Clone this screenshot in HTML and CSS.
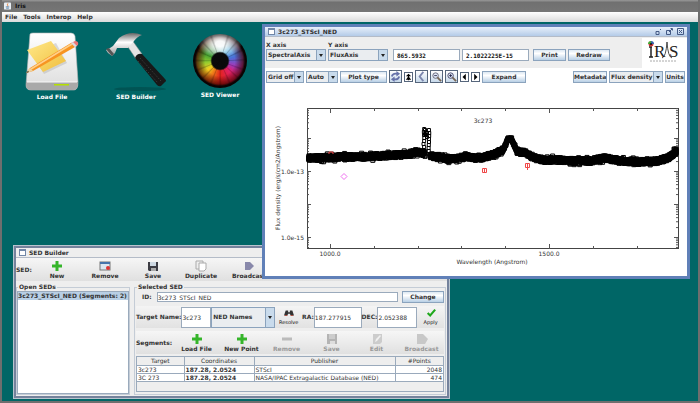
FILE: index.html
```
<!DOCTYPE html>
<html lang="en">
<head>
    <meta charset="UTF-8">
    <meta name="viewport" content="width=device-width, initial-scale=1.0">
    <title>Iris</title>
    <link rel="stylesheet" href="styles.css">
</head>
<body>

    <header class="app-title">
        <svg class="java-icon" viewBox="0 0 8 8"><rect width="8" height="8" rx="1" fill="#e8eef4"/><path d="M4.5 1C3 2.500 5 3 4 4.500" stroke="#e07020" fill="none"/><path d="M2 5h4M2.500 6.500h3" stroke="#5580a8"/></svg>
        <span>Iris</span>
    </header>

    <nav class="menu-bar">
        <button>File</button>
        <button>Tools</button>
        <button>Interop</button>
        <button>Help</button>
    </nav>

    <main class="desktop">

        <div class="launchers">
            <button class="launcher">
                <svg viewBox="0 0 60 60">
                    <defs>
                        <linearGradient id="disk" x1="0" y1="0" x2="0" y2="1"><stop offset="0" stop-color="#fff"/><stop offset="1" stop-color="#dcdcdc"/></linearGradient>
                        <linearGradient id="note" x1="0" y1="0" x2="1" y2="1"><stop offset="0" stop-color="#ffe98a"/><stop offset="1" stop-color="#f0bd3c"/></linearGradient>
                    </defs>
                    <path d="M8 2Q9 1 11 1H49Q52 1 53 4L56 50Q56 58 52 58H9Q4 58 4 53Z" fill="url(#disk)" stroke="#b5b5b5" stroke-width=".6"/>
                    <path d="M4 50H56V53Q55 58 51 58H9Q4 58 4 53Z" fill="#a9a9a9"/>
                    <path d="M5 50H55" stroke="#f8f8f8"/>
                    <rect x="32" y="52" width="15" height="1.500" fill="#b4e000"/>
                    <path d="M9 21L34 11 45 31 22 42Z" fill="#aaa" opacity=".4"/>
                    <path d="M5 18L29 9 44 29 21 40Z" fill="url(#note)"/>
                    <path d="M8 36L49 11 53 15 11 39 4 41Z" fill="#f79421"/>
                    <path d="M9 37L50 12" stroke="#ffd08a" stroke-width="1.500"/>
                    <path d="M4 41L8 36 11 39Z" fill="#edd2a4"/><path d="M4 41l2-2 1 1z" fill="#222"/>
                    <path d="M49 11l4-2q4 0 3 4l-3 2z" fill="#e77"/><path d="M49 11l2-1 4 4-2 1z" fill="#ddd"/>
                </svg>
                <span>Load File</span>
            </button>
            <button class="launcher">
                <svg viewBox="0 0 60 60">
                    <defs>
                        <linearGradient id="steel" x1="0" y1="0" x2="0" y2="1"><stop offset="0" stop-color="#666"/><stop offset=".4" stop-color="#fff"/><stop offset="1" stop-color="#999"/></linearGradient>
                    </defs>
                    <ellipse cx="34" cy="57" rx="26" ry="2" fill="#005454"/>
                    <path d="M20 12L26 8 36 22 30 27Z" fill="#e4e4e4" stroke="#888" stroke-width=".5"/>
                    <path d="M36 3Q24-2 13 6L7 14 4 16 0 18 2 21 6 24 9 21 11 16 16 16 22 16 28 9Q32 4 36 3Z" fill="url(#steel)"/>
                    <path d="M0 17L3 16 8 22 6 24Z" fill="#555"/>
                    <path d="M29 26Q31 21 36 22L59 47Q61 49 59 50L55 54Q53 55 51 53Z" fill="#181818"/>
                    <path d="M34 26L55 49M32 29L52 51" stroke="#444" stroke-width="1" stroke-dasharray="1 1.500"/>
                </svg>
                <span>SED Builder</span>
            </button>
            <button class="launcher">
                <div class="eye"><div class="eye-rays"></div></div>
                <span>SED Viewer</span>
            </button>
        </div>

        <!-- SED Builder -->
        <section class="window builder">
            <div class="window-title"><i class="window-icon"></i><span>SED Builder</span></div>
            <div class="toolbar">
                <span class="toolbar-label">SED:</span>
                <button><svg viewBox="0 0 12 12"><path d="M6 1v10M1 6h10" stroke="#35b52a" stroke-width="3"/></svg>New</button>
                <button><svg viewBox="0 0 12 12"><rect x="1" y="2" width="10" height="8" fill="#dce6f0" stroke="#777"/><path d="M1 3h10" stroke="#4774aa" stroke-width="2"/><circle cx="9" cy="8" r="2" fill="#d33"/></svg>Remove</button>
                <button><svg viewBox="0 0 12 12"><path d="M1 2h10v9H2L1 10z" fill="#3c3c44"/><path d="M3 2h6v4H3z" fill="#cdd8e2"/><path d="M4 8h5v3H4z" fill="#aaa"/></svg>Save</button>
                <button><svg viewBox="0 0 12 12"><path d="M1 1h7v8H1z" fill="#eee" stroke="#aaa"/><path d="M4 3h7v6l-2 2H4z" fill="#fff" stroke="#aaa"/></svg>Duplicate</button>
                <button><svg viewBox="0 0 12 12"><path d="M2 2h5l4 4-4 4H2z" fill="#88a"/></svg>Broadcast</button>
            </div>

            <div class="builder-panels">
                <fieldset class="open-seds">
                    <legend>Open SEDs</legend>
                    <ul class="sed-list">
                        <li class="selected">3c273_STScI_NED (Segments: 2)</li>
                    </ul>
                </fieldset>

                <fieldset class="selected-sed">
                    <legend>Selected SED</legend>
                    <div class="id-row">
                        <label for="sed-id">ID:</label>
                        <input id="sed-id" type="text" value="3c273_STScI_NED">
                        <button class="btn">Change</button>
                    </div>
                    <div class="target-row">
                        <label for="target">Target Name:</label>
                        <input id="target" class="target-input" type="text" value="3c273">
                        <span class="combo names"><select aria-label="Name resolver"><option>NED Names</option></select></span>
                        <button class="small-tool"><svg viewBox="0 0 12 12"><path d="M2 3h3v2h2V3h3l2 6H8L7 7H5L4 9H0z" fill="#333"/><path d="M1 9h3M8 9h3" stroke="#b43" stroke-width="1"/></svg>Resolve</button>
                        <label for="ra">RA:</label>
                        <input id="ra" class="ra-input" type="text" value="187.277915">
                        <label for="dec">DEC:</label>
                        <input id="dec" class="dec-input" type="text" value="2.052388">
                        <button class="small-tool apply"><svg viewBox="0 0 12 12"><path d="M2 6l3 3 6-7" fill="none" stroke="#1fa81c" stroke-width="2.500"/></svg>Apply</button>
                    </div>
                    <div class="toolbar segments">
                        <span class="toolbar-label">Segments:</span>
                        <button><svg viewBox="0 0 12 12"><path d="M6 1v10M1 6h10" stroke="#35b52a" stroke-width="3"/></svg>Load File</button>
                        <button><svg viewBox="0 0 12 12"><path d="M6 1v10M1 6h10" stroke="#35b52a" stroke-width="3"/></svg>New Point</button>
                        <button disabled><svg viewBox="0 0 12 12"><path d="M1 6h10" stroke="#bbb" stroke-width="3"/></svg>Remove</button>
                        <button disabled><svg viewBox="0 0 12 12"><path d="M1 1h10v10H1z" fill="#b4b4b4"/><path d="M3 1h6v5H3z" fill="#ccc"/><path d="M4 8h5v3H4z" fill="#ddd"/></svg>Save</button>
                        <button disabled><svg viewBox="0 0 12 12"><path d="M2 1h9v8l-2 2H2z" fill="#ccc"/><path d="M4 9l1-3 4-4 1 1-4 5z" fill="#f0f0f0"/></svg>Edit</button>
                        <button disabled><svg viewBox="0 0 12 12"><path d="M1 1h6l5 5-3 5H1z" fill="#c8c8c8"/></svg>Broadcast</button>
                    </div>
                    <div class="table-area">
                        <table>
                            <thead>
                                <tr><th class="col-target">Target</th><th class="col-coords">Coordinates</th><th>Publisher</th><th class="col-points">#Points</th></tr>
                            </thead>
                            <tbody>
                                <tr><td>3c273</td><td class="coords">187.28, 2.0524</td><td>STScI</td><td class="points">2048</td></tr>
                                <tr><td>3C 273</td><td class="coords">187.28, 2.0524</td><td>NASA/IPAC Extragalactic Database (NED)</td><td class="points">474</td></tr>
                            </tbody>
                        </table>
                    </div>
                </fieldset>
            </div>
        </section>

        <!-- SED Viewer -->
        <section class="window viewer">
            <div class="window-title">
                <i class="window-icon"></i><span>3c273_STScI_NED</span>
                <div class="window-controls">
                    <button aria-label="Minimize"><svg viewBox="0 0 7 7"><path d="M1 3.500h3v3H1zM5 2l1-1" fill="none" stroke="#445a85"/></svg></button>
                    <button aria-label="Maximize"><svg viewBox="0 0 7 7"><path d="M.5 2.500h4v4h-4zM3 4l3-3M4.500.5h2v2" fill="none" stroke="#445a85"/></svg></button>
                    <button aria-label="Close"><svg viewBox="0 0 7 7"><path d="M.5.5h6v6h-6zM2 2l3 3M5 2l-3 3" fill="none" stroke="#445a85"/></svg></button>
                </div>
            </div>

            <div class="axis-row">
                <div class="axis">
                    <label for="x-axis">X axis</label>
                    <span class="combo"><select id="x-axis"><option>SpectralAxis</option></select></span>
                </div>
                <div class="axis">
                    <label for="y-axis">Y axis</label>
                    <span class="combo"><select id="y-axis"><option>FluxAxis</option></select></span>
                </div>
                <input class="readout" type="text" aria-label="X value" value="865.5932">
                <input class="readout" type="text" aria-label="Y value" value="2.1022225E-15">
                <button class="btn print">Print</button>
                <button class="btn redraw">Redraw</button>
                <div class="logo">
                    <svg viewBox="0 0 45 29">
                        <path d="M7 9h3M9 9v10M7 19h4" stroke="#222" fill="none" stroke-width="1.500"/>
                        <circle cx="9" cy="6" r="2.500" fill="#c33"/><path d="M9 6L6 6A3 3 0 0 1 9 3z" fill="#4a3"/><path d="M9 6V3A3 3 0 0 1 12 6z" fill="#36a"/><circle cx="9" cy="6" r="1" fill="#111"/>
                        <text x="12" y="19" class="logo-text">R</text>
                        <text x="27" y="19" class="logo-text">S</text>
                        <path d="M20 20Q24 19 25 4Q26 19 30 20" stroke="#222" fill="none" stroke-width=".8"/>
                        <path d="M8 23h27" stroke="#aaa" stroke-width="1" stroke-dasharray="2 1"/>
                    </svg>
                </div>
            </div>

            <div class="plot-row">
                <span class="combo grid-combo"><select aria-label="Grid"><option>Grid off</option></select></span>
                <span class="combo auto-combo"><select aria-label="Scale"><option>Auto</option></select></span>
                <button class="btn plot-type">Plot type</button>
                <div class="plot-tools">
                    <button class="icon-btn" aria-label="Reset"><svg viewBox="0 0 12 12"><path d="M2 6Q3 2 8 3M10 6Q9 10 4 9" fill="none" stroke="#6672aa" stroke-width="2"/><path d="M7 0l4 3-4 3zM5 6L1 9l4 3z" fill="#6672aa"/></svg></button>
                    <button class="icon-btn narrow" aria-label="Up"><svg viewBox="0 0 8 12"><path d="M4 1l4 4H5v1l3 4H5v1H3v-1H0l3-4V5H0z" fill="#000"/></svg></button>
                    <button class="icon-btn" aria-label="Back"><svg viewBox="0 0 12 12"><path d="M8 1L4 6l4 5" fill="none" stroke="#7c86ad" stroke-width="2"/></svg></button>
                    <button class="icon-btn" aria-label="Zoom out"><svg viewBox="0 0 12 12"><circle cx="5" cy="5" r="3" fill="#dde6f6" stroke="#667" /><path d="M3.500 5h3" stroke="#335"/><path d="M7 7l4 4" stroke="#765" stroke-width="2"/></svg></button>
                    <button class="icon-btn" aria-label="Zoom in"><svg viewBox="0 0 12 12"><circle cx="5" cy="5" r="3" fill="#dde6f6" stroke="#446"/><path d="M3.500 5h3M5 3.500v3" stroke="#224"/><path d="M7 7l4 4" stroke="#765" stroke-width="2"/></svg></button>
                    <button class="icon-btn narrow" aria-label="Left"><svg viewBox="0 0 8 12"><path d="M6 1v10L1 6z" fill="#000"/></svg></button>
                    <button class="icon-btn narrow" aria-label="Right"><svg viewBox="0 0 8 12"><path d="M2 1v10l5-5z" fill="#000"/></svg></button>
                </div>
                <button class="btn expand">Expand</button>
                <div class="unit-tools">
                    <button class="btn metadata">Metadata</button>
                    <span class="combo flux-combo"><select aria-label="Flux"><option>Flux density</option></select></span>
                    <button class="btn units">Units</button>
                </div>
            </div>

            <svg id="chart" class="chart" viewBox="0 0 422 192"></svg>
        </section>

    </main>

    <script src="script.js"></script>
</body>
</html>
```

FILE: styles.css
```
* {
    box-sizing: border-box;
}
body {
    margin: 0;
    height: 100vh;
    display: flex;
    flex-direction: column;
    border: 2px solid #6e6e6e;
    border-top: 0;
    background-color: #006666;
    font-family: "DejaVu Sans", sans-serif;
    font-size: 6px;
    font-weight: bold;
    line-height: 8px;
    color: #333;
    overflow: hidden;
}
button, input, select {
    font: inherit;
    color: inherit;
    margin: 0;
    padding: 0;
    border: 0;
    border-radius: 0;
    background: none;
    min-width: 0;
}
svg {
    display: block;
}
.app-title {
    height: 12px;
    flex: none;
    display: flex;
    align-items: center;
    gap: 4px;
    padding: 0 2px;
    background: linear-gradient(#999, #707070 20%, #767676);
    color: #111;
}
.java-icon {
    width: 7px;
    height: 8px;
}
.menu-bar {
    height: 10px;
    flex: none;
    display: flex;
    align-items: center;
    gap: 6px;
    padding: 0 3px;
    background: linear-gradient(#fff, #dadada);
}
.desktop {
    position: relative;
    flex: 1;
    background-color: #006666;
}

/* desktop icons */
.launchers {
    display: flex;
    padding: 10px 8px;
}
.launcher {
    width: 84px;
    display: flex;
    flex-direction: column;
    align-items: center;
    gap: 1px;
    color: #fff;
}
.launcher svg {
    width: 60px;
    height: 60px;
}
.eye {
    width: 54px;
    height: 54px;
    margin: 2px 0;
    border-radius: 50%;
    background:
        radial-gradient(circle closest-side, #0a0a0a 30%, transparent 36%),
        radial-gradient(ellipse 22px 14px at 50% 18%, rgba(255, 255, 255, 0.95) 20%, rgba(255, 255, 255, 0) 100%),
        radial-gradient(circle closest-side, transparent 55%, rgba(70, 0, 0, 0.7) 85%, #0c0303 93%),
        conic-gradient(#9cc 0deg, #58b4e0 35deg, #4a6fd8 75deg, #a438b8 110deg, #e0206a 135deg, #e3241c 180deg, #ee7a18 210deg, #f0d020 235deg, #90cc30 265deg, #3c9c30 300deg, #6aa870 330deg, #9cc 360deg);
}
.eye-rays {
    height: 100%;
    border-radius: 50%;
    background: repeating-conic-gradient(rgba(0, 0, 0, 0) 0deg 14deg, rgba(0, 0, 0, 0.2) 18deg, rgba(0, 0, 0, 0) 23deg);
}

/* internal windows */
.window {
    position: absolute;
    display: flex;
    flex-direction: column;
    background-color: #eee;
    border: 3px solid #74829c;
}
.builder {
    left: 11px;
    top: 223px;
    width: 437px;
    height: 154px;
    outline: 1px solid #b9c4cf;
    outline-offset: -1px;
}
.viewer {
    left: 260px;
    top: 2px;
    width: 428px;
    height: 255px;
    border-color: #6080b8;
    background-color: #fff;
}
.window-title {
    height: 10px;
    flex: none;
    display: flex;
    align-items: center;
    gap: 3px;
    padding: 0 3px;
    background: radial-gradient(circle, #ccc 30%, transparent 40%) 0 0 / 2px 2px, #eee;
    border-bottom: 1px solid #b4bcc8;
}
.window-title span {
    padding-right: 3px;
    background-color: #eee;
}
.viewer .window-title {
    background: linear-gradient(#e8f0fa, #b4cbe8);
}
.viewer .window-title span {
    background: none;
}
.window-icon {
    width: 7px;
    height: 7px;
    border: 1px solid #7187a8;
    border-top-width: 2px;
    background-color: #fff;
}
.window-controls {
    margin-left: auto;
    display: flex;
    gap: 4px;
}
.window-controls svg {
    width: 7px;
    height: 7px;
}

/* shared controls */
.btn {
    height: 12px;
    flex: none;
    border: 1px solid #8ba3bd;
    background: linear-gradient(#dde8f3, #fff 35%, #b8cfe5);
    text-align: center;
}
.combo {
    position: relative;
    display: block;
    flex: none;
    height: 12px;
    border: 1px solid #8ba3bd;
    background: linear-gradient(to left, #c9dbec 8px, #8ba3bd 8px, #8ba3bd 9px, #eaedf0 9px);
}
.combo select {
    appearance: none;
    display: block;
    width: 100%;
    height: 100%;
    padding: 0 9px 0 1px;
}
.combo::after {
    content: "";
    position: absolute;
    right: 2px;
    top: 50%;
    margin-top: -1px;
    border: 2px solid transparent;
    border-top: 3px solid #222;
    border-bottom: 0;
    pointer-events: none;
}
input {
    border: 1px solid #9aaabc;
    background-color: #fff;
    font-weight: normal;
}

/* SED Builder */
.toolbar {
    height: 23px;
    flex: none;
    display: flex;
    align-items: center;
    background: linear-gradient(#f6f6f6, #e0e0e0);
}
.toolbar-label {
    width: 17px;
    white-space: nowrap;
}
.toolbar button {
    width: 48px;
    display: flex;
    flex-direction: column;
    align-items: center;
    white-space: nowrap;
}
.toolbar svg {
    width: 12px;
    height: 12px;
}
.toolbar button:disabled {
    color: #999;
}
.builder-panels {
    flex: 1;
    display: flex;
    gap: 4px;
    padding: 2px 1px 1px 0;
}
fieldset {
    min-width: 0;
    margin: 0;
    padding: 0 1px 1px;
    border: 1px solid #c4ccd6;
}
legend {
    margin-left: 1px;
    padding: 0 1px;
}
.open-seds {
    width: 114px;
    padding: 0;
}
.sed-list {
    height: 100%;
    margin: 0;
    padding: 0;
    list-style-type: none;
    background-color: #fff;
    border: 1px solid #9aaabc;
}
.sed-list li {
    height: 8px;
    white-space: nowrap;
}
.sed-list .selected {
    background-color: #b8cfe5;
}
.selected-sed {
    flex: 1;
    background: none;
}
.id-row {
    display: flex;
    align-items: center;
    gap: 4px;
    padding-left: 6px;
}
.id-row input {
    flex: 1;
    height: 10px;
    margin-left: 1px;
}
.id-row .btn {
    width: 42px;
}
.target-row {
    height: 22px;
    margin-top: 3px;
    display: flex;
    align-items: center;
    background: linear-gradient(#f4f4f4, #e2e2e2);
    white-space: nowrap;
}
.target-row input, .target-row .combo {
    height: 21px;
}
.target-row label {
    flex: none;
}
.target-row .target-input {
    width: 30px;
    margin-left: auto;
}
.names {
    width: 64px;
}
.ra-input {
    width: 48px;
}
.dec-input {
    width: 40px;
}
.small-tool {
    width: 27px;
    display: flex;
    flex-direction: column;
    align-items: center;
    font-size: 5px;
    font-weight: normal;
    color: #111;
}
.small-tool svg {
    width: 10px;
    height: 10px;
}
.segments {
    margin-top: 3px;
}
.segments .toolbar-label {
    width: 38px;
}
.segments button {
    flex: 1;
}
.table-area {
    height: 36px;
    margin-top: 2px;
    border: 1px solid #9aaabc;
}
table {
    width: 100%;
    table-layout: fixed;
    border-collapse: collapse;
    font-weight: normal;
}
th, td {
    height: 8px;
    padding: 0 1px;
    border: 1px solid #9aaabc;
    border-top: 0;
    line-height: 7px;
    white-space: nowrap;
}
th:first-child, td:first-child {
    border-left: 0;
}
th:last-child, td:last-child {
    border-right: 0;
}
th {
    font-weight: normal;
}
td {
    background-color: #fff;
}
.col-target {
    width: 47px;
}
.col-coords {
    width: 70px;
}
.col-points {
    width: 48px;
}
.coords {
    font-weight: bold;
}
.points {
    text-align: right;
}

/* SED Viewer */
.axis-row {
    height: 31px;
    flex: none;
    display: flex;
    align-items: flex-end;
    gap: 2px;
    padding: 0 0 7px 1px;
    background-color: #eee;
}
.axis .combo {
    width: 60px;
}
.axis label {
    display: block;
}
.readout {
    width: 67px;
    height: 12px;
    padding-left: 3px;
    font-family: "DejaVu Sans Mono", monospace;
    font-weight: bold;
    color: #111;
}
.axis + .readout {
    margin-left: 3px;
}
.print {
    width: 33px;
    margin-left: 2px;
}
.redraw {
    width: 42px;
}
.logo {
    width: 45px;
    height: 30px;
    margin: 0 0 -7px auto;
    background-color: #fff;
}
.logo-text {
    font-family: "Liberation Serif", serif;
    font-size: 17px;
    font-weight: normal;
    fill: #222;
}
.plot-row {
    flex: none;
    display: flex;
    align-items: center;
    gap: 2px;
    padding: 2px 2px 1px 1px;
}
.grid-combo {
    width: 38px;
}
.auto-combo {
    width: 32px;
}
.plot-type {
    width: 47px;
}
.plot-tools {
    display: flex;
    align-items: center;
    gap: 2px;
}
.icon-btn {
    width: 13px;
    height: 13px;
    border: 1px solid #56667c;
    background: linear-gradient(#fff, #c6d8ea);
}
.icon-btn.narrow {
    width: 9px;
    height: 10px;
    background: #fff;
}
.icon-btn svg {
    width: 100%;
    height: 100%;
}
.expand {
    width: 44px;
}
.unit-tools {
    margin-left: auto;
    display: flex;
    gap: 2px;
}
.metadata {
    width: 34px;
}
.flux-combo {
    width: 54px;
}
.units {
    width: 20px;
}
.chart {
    width: 100%;
    font-weight: normal;
}
.frame {
    fill: none;
    stroke: #444;
}
.tick {
    stroke: #555;
    stroke-width: 1;
}
.point {
    fill: none;
    stroke: #000;
    stroke-width: 1;
}
.point-red {
    fill: none;
    stroke: #f04848;
}
.point-pink {
    fill: none;
    stroke: #f070f0;
}
.chart text {
    fill: #333;
}
```

FILE: script.js
```
const chart = document.getElementById('chart');
const box = { left: 42, top: 24, right: 413, bottom: 165 };

// centre line of the spectrum, in chart units
const spectrum = [
    [42, 74], [55, 74], [75, 73], [95, 73], [115, 72], [135, 71], [145, 70], [151, 68], [157, 69],
    [165, 72], [175, 73], [185, 75], [195, 74], [201, 72], [210, 74], [220, 73], [230, 70],
    [238, 66], [241, 60], [243, 55], [246, 55], [249, 61], [252, 67], [260, 69], [270, 74],
    [280, 76], [295, 76], [305, 77], [325, 77], [340, 74], [355, 77], [375, 78], [392, 77],
    [403, 74], [409, 69], [413, 67]
];

let seed = 7;
function random() {
    seed = (seed * 16807) % 2147483647;
    return seed / 2147483647;
}

function add(tag, attrs, text) {
    const el = document.createElementNS('http://www.w3.org/2000/svg', tag);
    for (const name in attrs) el.setAttribute(name, attrs[name]);
    if (text) el.textContent = text;
    chart.appendChild(el);
}

function line(x1, y1, x2, y2) {
    add('path', { class: 'tick', d: `M${x1} ${y1}L${x2} ${y2}` });
}

function square(x, y, size) {
    return `M${x - size / 2} ${y - size / 2}h${size}v${size}h${-size}z`;
}

add('rect', { class: 'frame', x: box.left + 0.5, y: box.top + 0.5, width: box.right - box.left, height: box.bottom - box.top - 1 });

// wavelength ticks every 100 Angstrom
for (let i = 0; i < 8; i++) {
    const x = Math.round(65 + i * 43.8) + 0.5;
    const size = i % 5 === 0 ? 5 : 3;
    line(x, box.top, x, box.top + size);
    line(x, box.bottom, x, box.bottom - size);
}

// log flux ticks, 33 units per decade
for (let decade = -1; decade < 5; decade++) {
    for (let n = 1; n < 10; n++) {
        const y = 153.5 - 33 * (decade + Math.log10(n));
        if (y < box.top || y > box.bottom) continue;
        const size = n === 1 ? 4 : 2;
        line(box.left, y, box.left + size, y);
        line(box.right, y, box.right - size, y);
    }
}

let d = '';
for (let i = 1; i < spectrum.length; i++) {
    const [x1, y1] = spectrum[i - 1];
    const [x2, y2] = spectrum[i];
    const count = Math.max((x2 - x1) * 5, 12);
    // the narrow peak near 1400 has less scatter
    const noise = x1 > 235 && x1 < 252 ? 2 : 5;
    for (let k = 0; k < count; k++) {
        const t = k / count;
        const spread = random() > 0.93 ? noise + 3 : noise;
        const x = Math.min(Math.max(x1 + (x2 - x1) * t, box.left + 2), box.right - 2);
        if (x > 160 && x < 165) continue;
        d += square(x, y1 + (y2 - y1) * t + (random() - 0.5) * spread, 4);
    }
}
// emission line
for (let y = 45; y < 70; y += 3) {
    d += square(158.5 + random(), y, 3) + square(163.5 + random(), y + 1, 3);
}
d += square(160, 50, 3) + square(161, 51, 3) + square(162, 49, 3) + square(162, 53, 3) + square(160, 46, 3);
add('path', { class: 'point', d: d });

add('path', { class: 'point-red', d: square(219.5, 86.5, 4) + 'M219.5 84v4' + square(262.5, 81.5, 4) + 'M262.5 79v7' + 'M64 70v-2h4v2' });
add('path', { class: 'point-pink', d: 'M79 89.5l3 3-3 3-3-3z' });

add('text', { x: 218, y: 39, 'text-anchor': 'middle' }, '3c273');
add('text', { x: 39, y: 90, 'text-anchor': 'end' }, '1.0e-13');
add('text', { x: 39, y: 156, 'text-anchor': 'end' }, '1.0e-15');
add('text', { x: 65, y: 172, 'text-anchor': 'middle' }, '1000.0');
add('text', { x: 284, y: 172, 'text-anchor': 'middle' }, '1500.0');
add('text', { x: 227, y: 180, 'text-anchor': 'middle' }, 'Wavelength (Angstrom)');
add('text', { x: 0, y: 0, 'text-anchor': 'middle', transform: 'translate(15 94) rotate(-90)' }, 'Flux density (erg/s/cm2/Angstrom)');
```
